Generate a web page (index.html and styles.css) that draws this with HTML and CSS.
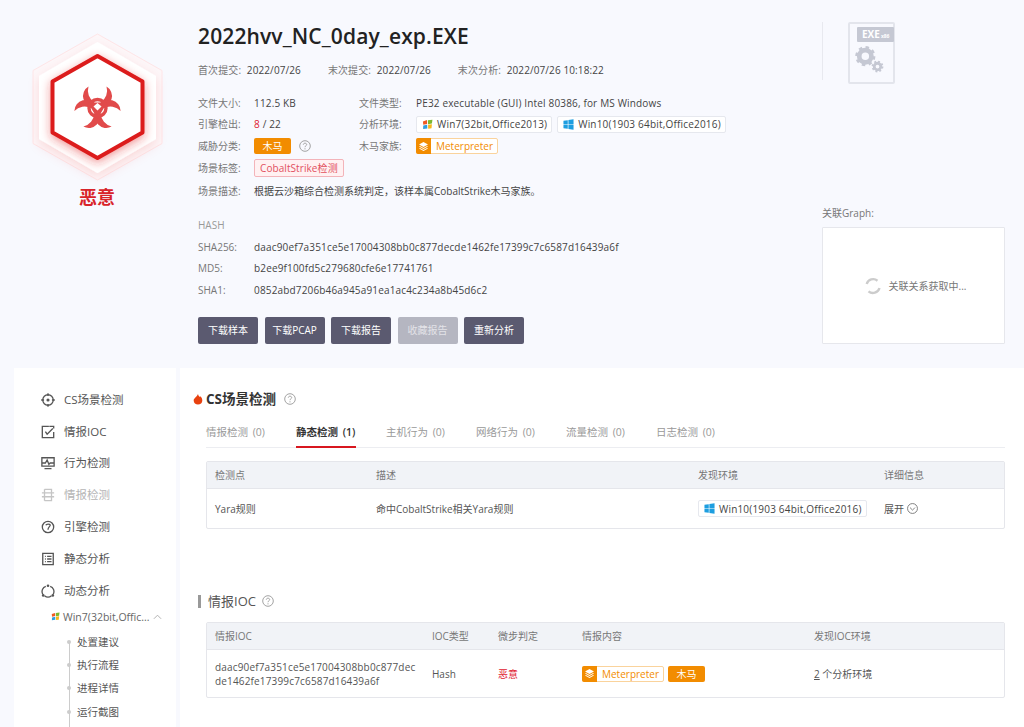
FILE: index.html
```html
<!DOCTYPE html>
<html lang="zh-CN">
<head>
<meta charset="utf-8">
<title>2022hvv_NC_0day_exp.EXE</title>
<link rel="stylesheet" href="styles.css">
</head>
<body>
<svg class="defs" width="0" height="0" aria-hidden="true">
  <defs>
    <symbol id="win7" viewBox="0 0 12 12">
      <path d="M1 2.600 5.400 1.200 5.600 5.400 1.400 6.400Z" fill="#ef5a24"/>
      <path d="M6.400 1.400 11.400 .8 10.800 5 6.600 5.600Z" fill="#7cb82f"/>
      <path d="M1.400 7.200 5.600 6.200 5.800 10.400 1.200 11Z" fill="#2f9ee0"/>
      <path d="M6.600 6.200 10.800 5.800 10.400 10.200 6.800 10.600Z" fill="#f6b81a"/>
    </symbol>
    <symbol id="win10" viewBox="0 0 12 12">
      <path d="M.5 2 5.200 1.300V5.700H.5ZM5.900 1.200 11.500.4V5.700H5.900ZM.5 6.400H5.200V10.700L.5 10ZM5.900 6.400H11.500V11.600L5.900 10.800Z" fill="#1d9ee0"/>
    </symbol>
    <symbol id="layers" viewBox="0 0 16 16">
      <path d="M8 2.500 13.500 5.500 8 8.500 2.500 5.500Z" fill="#fff"/>
      <path d="M3.600 7.300 8 9.700 12.400 7.300 13.500 8 8 11 2.500 8Z" fill="#fff"/>
      <path d="M3.600 9.800 8 12.200 12.400 9.800 13.500 10.500 8 13.500 2.500 10.500Z" fill="#fff"/>
    </symbol>
    <symbol id="help" viewBox="0 0 12 12">
      <circle cx="6" cy="6" r="5.300" fill="none" stroke="#999" stroke-width=".9"/>
      <path d="M4.300 4.700C4.400 3.700 5.100 3.200 6 3.200 7 3.200 7.700 3.800 7.700 4.600 7.700 5.700 6 5.800 6 7.200" fill="none" stroke="#999" stroke-width=".9"/>
      <circle cx="6" cy="8.800" r=".6" fill="#999"/>
    </symbol>
  </defs>
</svg>

<div class="page">
  <header class="hero">
    <section class="verdict">
      <svg class="hex" viewBox="0 0 140 156" aria-hidden="true">
        <defs>
          <filter id="glow" x="-30%" y="-30%" width="160%" height="160%">
            <feDropShadow dx="0" dy="3" stdDeviation="5" flood-color="#e02020" flood-opacity=".45"/>
          </filter>
          <filter id="halo" x="-30%" y="-30%" width="160%" height="160%">
            <feDropShadow dx="0" dy="4" stdDeviation="6" flood-color="#e02020" flood-opacity=".12"/>
          </filter>
        </defs>
        <path d="M70.500 4 135 40.500V113.500L70.500 150 6 113.500V40.500Z" fill="#fdf7f9" stroke="#ffe6e8" stroke-width="1"/>
        <path d="M70.500 12 129 46V109L70.500 143 12 109V46Z" fill="#fff" filter="url(#halo)"/>
        <path d="M70.500 26 115.500 51.500V102.500L70.500 128 25.500 102.500V51.500Z" fill="#fff" stroke="#dc1c1c" stroke-width="4" stroke-linejoin="round" filter="url(#glow)"/>
        <g transform="translate(70.500 78)" fill="#e14a4a">
          <path id="horn" d="M-9-21.500A11 11 0 0 0-3-1L3-1A11 11 0 0 0 9-21.500 14 14 0 0 1 3-5.500L-3-5.500A14 14 0 0 1-9-21.500Z"/>
          <use href="#horn" transform="rotate(120)"/>
          <use href="#horn" transform="rotate(240)"/>
          <circle r="8.500" fill="none" stroke="#e14a4a" stroke-width="3.400"/>
          <path d="M0-5 4-1.500 0 2.500-4-1.500Z" fill="#fff"/>
        </g>
      </svg>
      <div class="verdict-label">恶意</div>
    </section>

    <section class="summary">
      <h1 class="file-name">2022hvv_NC_0day_exp.EXE</h1>
      <div class="dates">
        <span class="date"><span class="muted">首次提交:</span> 2022/07/26</span>
        <span class="date"><span class="muted">末次提交:</span> 2022/07/26</span>
        <span class="date"><span class="muted">末次分析:</span> 2022/07/26 10:18:22</span>
      </div>

      <div class="facts">
        <div class="fact-row">
          <span class="label">文件大小:</span><span class="value col-a latin">112.5 KB</span>
          <span class="label label-b">文件类型:</span><span class="value latin">PE32 executable (GUI) Intel 80386, for MS Windows</span>
        </div>
        <div class="fact-row">
          <span class="label">引擎检出:</span><span class="value col-a latin"><b class="red">8</b> / 22</span>
          <span class="label label-b">分析环境:</span>
          <span class="env"><svg class="ico"><use href="#win7"/></svg>Win7(32bit,Office2013)</span>
          <span class="env"><svg class="ico"><use href="#win10"/></svg>Win10(1903 64bit,Office2016)</span>
        </div>
        <div class="fact-row">
          <span class="label">威胁分类:</span>
          <span class="value col-a threat-cell"><span class="tag-orange">木马</span><svg class="help"><use href="#help"/></svg></span>
          <span class="label label-b">木马家族:</span>
          <span class="family"><span class="family-ico"><svg class="layer-ico"><use href="#layers"/></svg></span><span class="family-name">Meterpreter</span></span>
        </div>
        <div class="fact-row">
          <span class="label">场景标签:</span><span class="tag-pink">CobaltStrike检测</span>
        </div>
        <div class="fact-row">
          <span class="label">场景描述:</span><span class="value">根据云沙箱综合检测系统判定，该样本属CobaltStrike木马家族。</span>
        </div>
      </div>

      <div class="hash-title">HASH</div>
      <div class="hash-row"><span class="label">SHA256:</span><span class="value latin">daac90ef7a351ce5e17004308bb0c877decde1462fe17399c7c6587d16439a6f</span></div>
      <div class="hash-row"><span class="label">MD5:</span><span class="value latin">b2ee9f100fd5c279680cfe6e17741761</span></div>
      <div class="hash-row"><span class="label">SHA1:</span><span class="value latin">0852abd7206b46a945a91ea1ac4c234a8b45d6c2</span></div>

      <div class="actions">
        <button class="btn">下载样本</button>
        <button class="btn">下载PCAP</button>
        <button class="btn">下载报告</button>
        <button class="btn btn-off">收藏报告</button>
        <button class="btn">重新分析</button>
      </div>
    </section>

    <aside class="side">
      <div class="file-type">
        <div class="file-icon">
          <span class="file-ext">EXE<small>x86</small></span>
          <svg class="gears" viewBox="0 0 32 32" aria-hidden="true">
            <circle cx="11" cy="13" r="6.500" fill="none" stroke="#c5c8d3" stroke-width="5"/>
            <circle cx="11" cy="13" r="9" fill="none" stroke="#c5c8d3" stroke-width="3.500" stroke-dasharray="3.500 3.570"/>
            <circle cx="24" cy="24" r="3.500" fill="none" stroke="#c5c8d3" stroke-width="3"/>
            <circle cx="24" cy="24" r="5.300" fill="none" stroke="#c5c8d3" stroke-width="2" stroke-dasharray="2 2.160"/>
          </svg>
        </div>
      </div>
      <div class="graph-label">关联Graph:</div>
      <div class="graph-box">
        <svg class="spin" viewBox="0 0 18 18" aria-hidden="true">
          <path d="M2.700 7A6.800 6.800 0 0 1 13.500 3.700" fill="none" stroke="#ccc" stroke-width="2.400"/>
          <path d="M15.500 11A6.800 6.800 0 0 1 4.500 14.300" fill="none" stroke="#ccc" stroke-width="2.400"/>
        </svg>
        <span>关联关系获取中...</span>
      </div>
    </aside>
  </header>

  <div class="body">
    <nav class="nav">
      <a class="nav-item"><svg class="nav-ico" viewBox="0 0 16 16"><circle cx="8" cy="8" r="6"/><circle class="dot" cx="8" cy="8" r="1.800"/><path d="M8 .2V3.500M8 12.500V15.800M.2 8H3.500M12.500 8H15.800"/></svg>CS场景检测</a>
      <a class="nav-item"><svg class="nav-ico" viewBox="0 0 16 16"><path d="M14.500 8V14.500H1.500V1.500H9"/><path d="M5 7.500 7 10.500 13.500 4"/><path d="M9.500 1.500H14.500V4"/></svg>情报IOC</a>
      <a class="nav-item"><svg class="nav-ico" viewBox="0 0 16 16"><path d="M1 2H15V11.500H1ZM4 14.500H12M1 8H5L7 4.500 9 9.500 10.500 8H15"/></svg>行为检测</a>
      <a class="nav-item nav-off"><svg class="nav-ico" viewBox="0 0 16 16"><path d="M4 1.500H12V14.500H4M1 5.500H15M1 10H15M4 1.500V14.500M12 1.500V14.500"/></svg>情报检测</a>
      <a class="nav-item"><svg class="nav-ico" viewBox="0 0 16 16"><circle cx="8" cy="8" r="6.500"/><path d="M5.500 6C6 4.500 10.500 4.300 10.500 6 10.500 7.500 8 8 8 11"/></svg>引擎检测</a>
      <a class="nav-item"><svg class="nav-ico" viewBox="0 0 16 16"><path d="M2 1.500H14V14.500H2ZM4.500 5H5.500M7 5H12M4.500 8H5.500M7 8H12M4.500 11H5.500M7 11H12"/></svg>静态分析</a>
      <a class="nav-item"><svg class="nav-ico" viewBox="0 0 16 16"><path d="M5.500 2.800A6 6 0 0 0 2 11.500M4 13.500A6.500 6.500 0 0 0 12 13.500M14 11.500A6 6 0 0 0 10.500 2.800"/><circle class="dot" cx="8" cy="2" r="1.500"/><circle class="dot" cx="2.500" cy="13" r="1.500"/><circle class="dot" cx="13.500" cy="13" r="1.500"/></svg>动态分析</a>
      <div class="nav-env"><svg class="nav-env-ico"><use href="#win7"/></svg><span>Win7(32bit,Offic...</span><svg class="chev" viewBox="0 0 10 6"><path d="M1 5 5 1 9 5"/></svg></div>
      <ul class="nav-tree">
        <li>处置建议</li>
        <li>执行流程</li>
        <li>进程详情</li>
        <li>运行截图</li>
      </ul>
    </nav>

    <main class="content">
      <div class="sec-head">
        <svg class="flame" viewBox="0 0 12 14" aria-hidden="true"><path d="M6 0C6.500 2.500 7.500 2.800 8.500 3.800L9 2.800C10.800 4.500 11.500 6.300 11.500 8.200 11.500 11.400 9 13.500 6 13.500S.5 11.400.5 8.200C.5 5.200 4.500 4 6 0Z" fill="#e8410f"/></svg>
        <h2 class="sec-title">CS场景检测</h2>
        <svg class="help help-sec"><use href="#help"/></svg>
      </div>
      <div class="tabs">
        <span class="tab">情报检测 (0)</span>
        <span class="tab tab-on">静态检测 (1)</span>
        <span class="tab">主机行为 (0)</span>
        <span class="tab">网络行为 (0)</span>
        <span class="tab">流量检测 (0)</span>
        <span class="tab">日志检测 (0)</span>
      </div>
      <div class="table cs-table">
        <div class="cell th">检测点</div>
        <div class="cell th">描述</div>
        <div class="cell th">发现环境</div>
        <div class="cell th">详细信息</div>
        <div class="cell td">Yara规则</div>
        <div class="cell td">命中CobaltStrike相关Yara规则</div>
        <div class="cell td"><span class="env"><svg class="ico"><use href="#win10"/></svg>Win10(1903 64bit,Office2016)</span></div>
        <div class="cell td">展开<svg class="expand" viewBox="0 0 12 12"><circle cx="6" cy="6" r="5.400"/><path d="M3.300 5 6 7.700 8.700 5"/></svg></div>
      </div>

      <div class="sec-head ioc-head">
        <span class="bar"></span>
        <h2 class="ioc-title">情报IOC</h2>
        <svg class="help help-ioc"><use href="#help"/></svg>
      </div>
      <div class="table ioc-table">
        <div class="cell th">情报IOC</div>
        <div class="cell th">IOC类型</div>
        <div class="cell th">微步判定</div>
        <div class="cell th">情报内容</div>
        <div class="cell th">发现IOC环境</div>
        <div class="cell td latin ioc-hash">daac90ef7a351ce5e17004308bb0c877dec<br>de1462fe17399c7c6587d16439a6f</div>
        <div class="cell td">Hash</div>
        <div class="cell td red">恶意</div>
        <div class="cell td intel"><span class="family"><span class="family-ico"><svg class="layer-ico"><use href="#layers"/></svg></span><span class="family-name">Meterpreter</span></span><span class="tag-orange">木马</span></div>
        <div class="cell td"><u>2</u>&nbsp;个分析环境</div>
      </div>
    </main>
  </div>
</div>
</body>
</html>
```

FILE: styles.css
```css
* { box-sizing: border-box; }
html, body { margin: 0; height: 727px; overflow: hidden; }
body {
  background: #f8f9fe;
  color: #555;
  font: 10px/14px "Open Sans", "Noto Sans CJK SC", sans-serif;
}
.defs { position: absolute; }
.page { display: flex; flex-direction: column; }
.latin { letter-spacing: .16px; }

/* hero */
.hero { display: flex; height: 368px; }
.verdict { width: 198px; padding: 30px 4px 0 0; display: flex; flex-direction: column; align-items: center; }
.hex { width: 140px; height: 156px; display: block; }
.verdict-label { color: #d8232a; font-size: 18px; line-height: 24px; font-weight: 700; margin-top: -1px; }

.summary { width: 624px; padding-top: 22px; }
.file-name { margin: 0; font-size: 21px; line-height: 28px; font-weight: 600; color: #222; letter-spacing: .13px; }
.dates { display: flex; margin-top: 13px; height: 14px; }
.date { color: #444; margin-right: 27px; letter-spacing: .1px; }
.muted { color: #777; margin-right: 3px; }

.facts { margin-top: 15px; }
.fact-row { display: flex; align-items: center; height: 22px; }
.fact-row:first-child { height: 21px; }
.fact-row:last-child { margin-top: 1px; }
.label { width: 56px; flex: none; color: #777; }
.label-b { width: 57px; }
.col-a { width: 105px; flex: none; }
.value { color: #444; }
.red { color: #e02030; font-weight: 400; }
.env {
  display: inline-flex; align-items: center; height: 17px; padding: 0 4px 0 5px; margin-right: 5px;
  background: #fff; border: 1px solid #e6e8ee; border-radius: 2px; color: #444; white-space: nowrap; letter-spacing: .19px;
}
.ico { width: 11px; height: 11px; margin-right: 4px; }
.threat-cell { display: flex; align-items: center; }
.tag-orange {
  display: inline-block; width: 37px; height: 16px; line-height: 16px; text-align: center;
  background: #f28c00; color: #fff; border-radius: 2px;
}
.help { width: 12px; height: 12px; margin-left: 8px; }
.family { display: inline-flex; height: 16px; border: 1px solid #fad39c; border-radius: 2px; background: #fff; }
.family-ico { width: 15px; margin: -1px 0 -1px -1px; background: #f28c00; display: flex; align-items: center; justify-content: center; border-radius: 2px 0 0 2px; }
.layer-ico { width: 13px; height: 13px; }
.family-name { color: #f28c00; padding: 0 4px 0 5px; line-height: 14px; }
.tag-pink {
  height: 18px; line-height: 16px; padding: 0 5px; color: #e2505e; background: #fff1f2;
  border: 1px solid #f3b4ba; border-radius: 2px; letter-spacing: .08px;
}

.hash-title { margin-top: 16px; color: #999; }
.hash-row { display: flex; align-items: center; height: 21.500px; }
.hash-title + .hash-row { margin-top: 4px; }
.actions { display: flex; gap: 6.500px; margin-top: 16px; }
.btn {
  width: 60px; height: 27px; padding: 0; border: 0; border-radius: 2px;
  background: #5b5a70; color: #fff; font: inherit;
}
.btn-off { background: #b5b6c1; color: #e3e3e8; }

.side { flex: 1; padding: 22px 19px 0 0; display: flex; flex-direction: column; }
.file-type { border-left: 1px solid #e8e9ef; height: 58px; padding-left: 25px; }
.file-icon { position: relative; width: 43px; height: 58px; }
.file-icon::before { content: ""; position: absolute; left: 0; top: 0; width: 43px; height: 58px; border: 2px solid #e3e5ec; border-radius: 2px; }
.file-ext {
  position: absolute; left: 9px; top: 5px; width: 37px; height: 15px; background: #c5c8d3; color: #fff;
  font-size: 10px; line-height: 15px; font-weight: 700; padding-left: 5px; border-radius: 1px;
}
.file-ext small { font-size: 5px; margin-left: 1px; }
.gears { position: absolute; left: 7px; top: 22px; width: 30px; height: 30px; }
.graph-label { color: #777; margin-top: 126px; }
.graph-box {
  margin-top: 7px; height: 117px; padding-left: 3px; background: #fff; border: 1px solid #e6e7ec; border-radius: 1px;
  display: flex; align-items: center; justify-content: center; gap: 7px; color: #777;
}
.spin { width: 18px; height: 18px; }

/* lower */
.body { display: flex; margin-left: 14px; gap: 4px; height: 359px; }
.nav { width: 162px; flex: none; background: #fff; padding-top: 16px; }
.nav-item { display: flex; align-items: center; height: 31.800px; padding-left: 27px; color: #555; font-size: 11.500px; }
.nav-off { color: #b5b5b5; }
.nav-off .nav-ico { stroke: #c5c5c5; }
.nav-ico { width: 14px; height: 14px; margin-right: 9px; fill: none; stroke: #555; stroke-width: 1.500; flex: none; }
.nav-ico .dot { fill: #555; stroke: none; }
.nav-env { display: flex; align-items: center; height: 22px; margin-top: -1px; padding-left: 37px; color: #666; font-size: 10.500px; white-space: nowrap; }
.nav-env-ico { width: 9px; height: 9px; margin-right: 3px; }
.chev { width: 9px; height: 6px; margin-left: 3px; fill: none; stroke: #aaa; }
.nav-tree { list-style: none; margin: 3px 0 0 55px; padding: 0 0 0 8px; position: relative; font-size: 10.500px; color: #555; }
.nav-tree::before { content: ""; position: absolute; left: 0; top: 10px; bottom: -30px; width: 1px; background: #ccc; }
.nav-tree li { height: 23.400px; line-height: 23.400px; position: relative; }
.nav-tree li::before { content: ""; position: absolute; left: -10px; top: 9px; width: 4px; height: 4px; border-radius: 50%; background: #ccc; }

.content { flex: 1; background: #fff; padding: 0 19px 0 26px; min-width: 0; }
.sec-head { display: flex; align-items: center; height: 20px; margin-top: 21px; margin-left: -13px; }
.flame { width: 10px; height: 11px; margin-right: 3px; }
.sec-title { margin: 0; font-size: 13.500px; line-height: 20px; font-weight: 700; color: #333; }
.help-sec { margin-left: 8px; }
.tabs { display: flex; height: 35px; margin-top: 4px; padding-top: 12px; border-bottom: 1px solid #ecedf1; }
.tab { width: 90px; font-size: 10.500px; color: #999; white-space: nowrap; word-spacing: 2px; }
.tab-on { color: #333; font-weight: 600; position: relative; flex: none; }
.tab-on::after { content: ""; position: absolute; left: 0; top: 21px; width: 60px; height: 2px; background: #d8171f; }

.table { display: grid; margin-top: 13px; border: 1px solid #e5e6eb; border-radius: 2px; }
.cs-table { grid-template-columns: 161px 322px 186px 1fr; grid-template-rows: 27px 39px; }
.ioc-table { grid-template-columns: 217px 66px 84px 232px 1fr; grid-template-rows: 27px 47px; margin-top: 11px; }
.cell { display: flex; align-items: center; padding-left: 8px; white-space: nowrap; }
.th { background: #f1f3f7; color: #777; border-bottom: 1px solid #e5e6eb; }
.td { color: #555; }
.td.red { color: #e02030; }
.expand { width: 11px; height: 11px; margin-left: 3px; fill: none; stroke: #777; }
.ioc-hash { line-height: 14px; }
.intel { gap: 4px; }

.ioc-head { margin-top: 62px; margin-left: -8px; }
.bar { width: 3px; height: 13px; background: #999; margin-right: 7px; }
.ioc-title { margin: 0; font-size: 13px; line-height: 20px; font-weight: 400; color: #555; }
.help-ioc { margin-left: 6px; }
```
